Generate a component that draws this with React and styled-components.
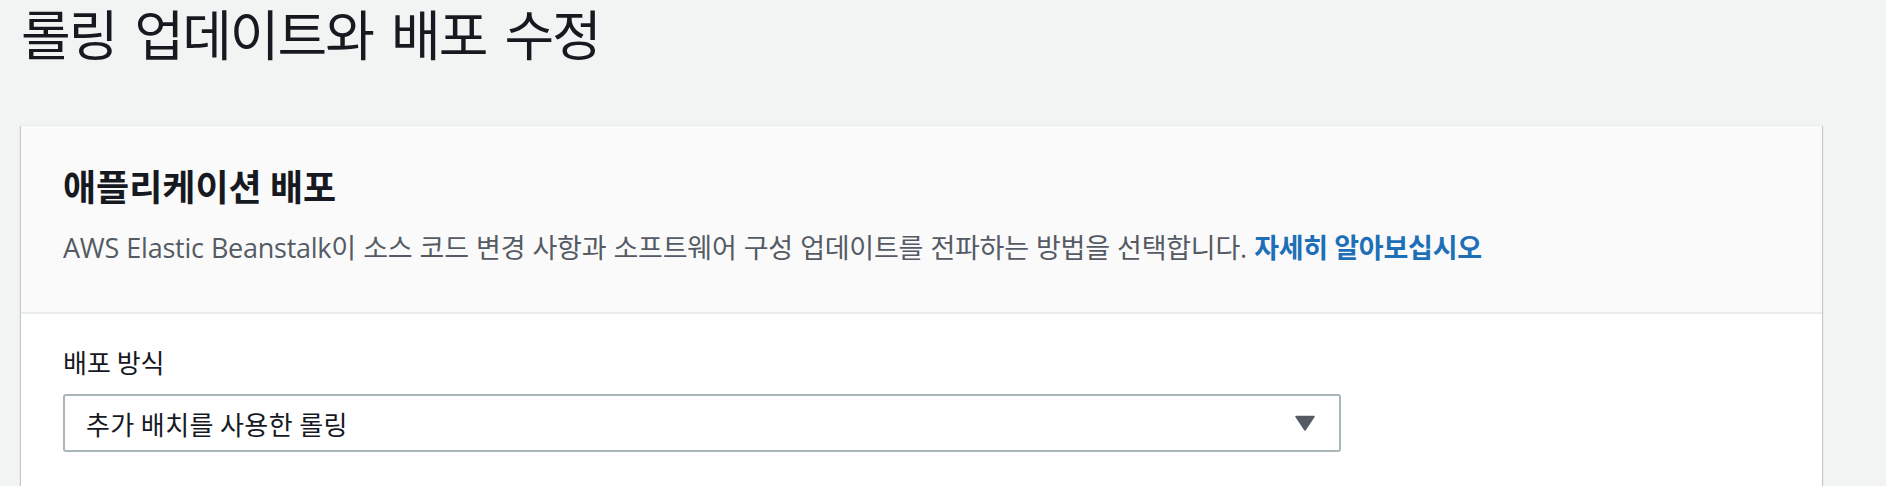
import React from 'react';
import styled, { createGlobalStyle } from 'styled-components';

const GlobalStyle = createGlobalStyle`
  html, body {
    margin: 0;
    padding: 0;
    background: #f2f3f3;
  }
  body {
    font-family: "Noto Sans CJK KR", "Open Sans", sans-serif;
    color: #16191f;
  }
`;

export default function App() {
  return (
    <>
      <GlobalStyle />
      <Page>
        <PageTitle>롤링 업데이트와 배포 수정</PageTitle>
        <Card>
          <CardHeader>
            <CardTitle>애플리케이션 배포</CardTitle>
            <Description>
              AWS Elastic Beanstalk이 소스 코드 변경 사항과 소프트웨어 구성 업데이트를 전파하는 방법을 선택합니다.{' '}
              <LearnMore href="#">자세히 알아보십시오</LearnMore>
            </Description>
          </CardHeader>
          <CardBody>
            <FieldLabel>배포 방식</FieldLabel>
            <Select>
              <SelectValue>추가 배치를 사용한 롤링</SelectValue>
              <Caret viewBox="0 0 20 16" aria-hidden="true">
                <path d="M1 1.5 L19 1.5 L10 15 Z" fill="#545b64" stroke="#545b64" strokeWidth="1.5" strokeLinejoin="round" />
              </Caret>
            </Select>
          </CardBody>
        </Card>
      </Page>
    </>
  );
}

const Page = styled.div`
  width: 1801px;
  padding: 0 0 0 21px;
`;

const PageTitle = styled.h1`
  margin: 0;
  font-family: "Noto Sans CJK KR", sans-serif;
  font-size: 54px;
  font-weight: 400;
  line-height: 66px;
  letter-spacing: -2px;
  word-spacing: 8px;
  color: #16191f;
`;

const Card = styled.section`
  margin-top: 59px;
  background: #ffffff;
  border-top: 1px solid #eaeded;
  box-shadow: 0 1px 1px 0 rgba(0, 28, 36, 0.3), 1px 1px 1px 0 rgba(0, 28, 36, 0.15),
    -1px 1px 1px 0 rgba(0, 28, 36, 0.15);
`;

const CardHeader = styled.header`
  background: #fafafa;
  border-bottom: 2px solid #eaeded;
  padding: 36px 42px 46px;
`;

const CardTitle = styled.h2`
  margin: 0;
  font-size: 36px;
  font-weight: 700;
  line-height: 46px;
  letter-spacing: 0;
  color: #16191f;
`;

const Description = styled.p`
  margin: 21px 0 0;
  font-family: "Open Sans", "Noto Sans CJK KR", sans-serif;
  font-size: 27px;
  line-height: 36px;
  letter-spacing: -0.25px;
  word-spacing: 0.5px;
  color: #545b64;
`;

const LearnMore = styled.a`
  font-family: "Noto Sans CJK KR", sans-serif;
  font-weight: 700;
  color: #1d6fb8;
  text-decoration: none;
`;

const CardBody = styled.div`
  padding: 30px 42px 40px;
`;

const FieldLabel = styled.div`
  font-size: 26px;
  line-height: 36px;
  color: #16191f;
`;

const Select = styled.div`
  margin-top: 14px;
  width: 1278px;
  height: 58px;
  box-sizing: border-box;
  display: flex;
  align-items: center;
  justify-content: space-between;
  padding: 0 24px 0 21px;
  border: 2px solid #aab7b8;
  border-radius: 3px;
  background: #ffffff;
`;

const SelectValue = styled.span`
  font-size: 26px;
  letter-spacing: 0.4px;
  color: #16191f;
`;

const Caret = styled.svg`
  width: 20px;
  height: 16px;
  flex: none;
`;
